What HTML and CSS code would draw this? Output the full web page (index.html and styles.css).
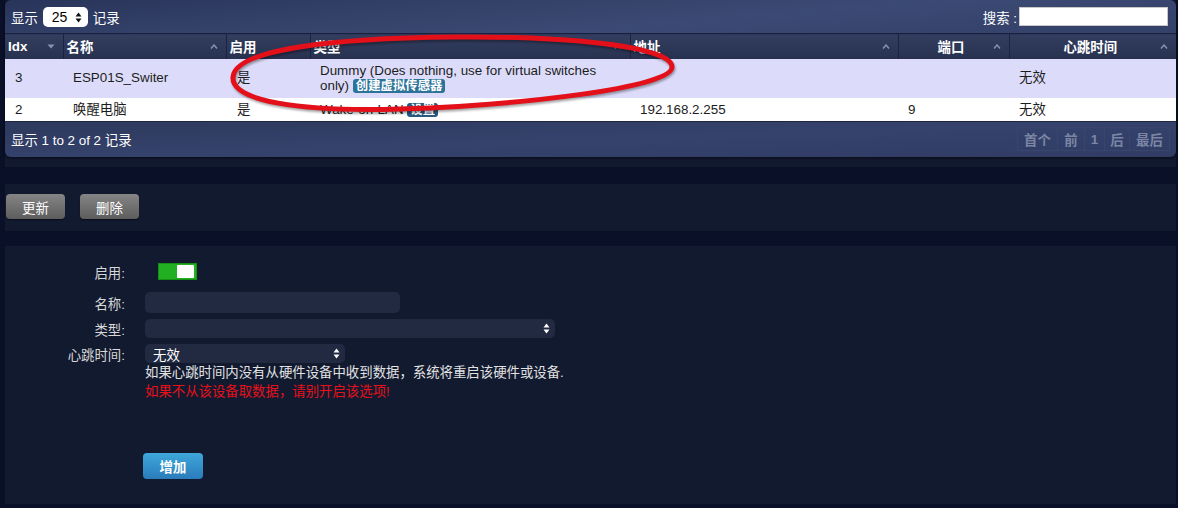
FILE: index.html
```html
<!DOCTYPE html>
<html lang="zh">
<head>
<meta charset="utf-8">
<title>硬件</title>
<link rel="stylesheet" href="styles.css">
</head>
<body>
<div class="page">
  <section class="sec sec-table">
    <div class="panel">
      <div class="topbar">
        <div class="length">
          <span>显示</span>
          <span class="sel-white">25
            <svg class="updown" width="7" height="11" viewBox="0 0 7 11"><path d="M3.5 0.5 L6.5 4.5 L0.5 4.5 Z M3.5 10.5 L6.5 6.5 L0.5 6.5 Z" fill="#111"/></svg>
          </span>
          <span>记录</span>
        </div>
        <div class="search">
          <span>搜索 :</span>
          <span class="search-input"></span>
        </div>
      </div>
      <table class="grid">
        <colgroup>
          <col style="width:58px"><col style="width:163px"><col style="width:84px"><col style="width:320px"><col style="width:268px"><col style="width:111px"><col style="width:167px">
        </colgroup>
        <thead>
          <tr>
            <th><div class="th"><span class="lbl">Idx</span><svg class="sort" width="8" height="5" viewBox="0 0 8 5"><path d="M0.5 0.5 L7.5 0.5 L4 4.5 Z" fill="#8993ad"/></svg></div></th>
            <th><div class="th"><span class="lbl">名称</span><svg class="sort" width="8" height="5" viewBox="0 0 8 5"><path d="M1 4.5 L4 1 L7 4.5" fill="none" stroke="#8993ad" stroke-width="1.4"/></svg></div></th>
            <th><div class="th"><span class="lbl">启用</span></div></th>
            <th><div class="th"><span class="lbl">类型</span><svg class="sort" width="8" height="5" viewBox="0 0 8 5"><path d="M1 4.5 L4 1 L7 4.5" fill="none" stroke="#8993ad" stroke-width="1.4"/></svg></div></th>
            <th><div class="th"><span class="lbl">地址</span><svg class="sort" width="8" height="5" viewBox="0 0 8 5"><path d="M1 4.5 L4 1 L7 4.5" fill="none" stroke="#8993ad" stroke-width="1.4"/></svg></div></th>
            <th><div class="th center"><span class="lbl">端口</span><svg class="sort" width="8" height="5" viewBox="0 0 8 5"><path d="M1 4.5 L4 1 L7 4.5" fill="none" stroke="#8993ad" stroke-width="1.4"/></svg></div></th>
            <th><div class="th center"><span class="lbl">心跳时间</span><svg class="sort" width="8" height="5" viewBox="0 0 8 5"><path d="M1 4.5 L4 1 L7 4.5" fill="none" stroke="#8993ad" stroke-width="1.4"/></svg></div></th>
          </tr>
        </thead>
        <tbody>
          <tr class="row-sel">
            <td>3</td>
            <td>ESP01S_Switer</td>
            <td>是</td>
            <td>Dummy (Does nothing, use for virtual switches only) <span class="badge">创建虚拟传感器</span></td>
            <td></td>
            <td></td>
            <td>无效</td>
          </tr>
          <tr>
            <td>2</td>
            <td>唤醒电脑</td>
            <td>是</td>
            <td>Wake-on-LAN <span class="badge dark">设置</span></td>
            <td>192.168.2.255</td>
            <td>9</td>
            <td>无效</td>
          </tr>
        </tbody>
      </table>
      <div class="footer">
        <span>显示 1 to 2 of 2 记录</span>
        <div class="pager">
          <span class="pg w39">首个</span>
          <span class="pg w27">前</span>
          <span class="pg w20">1</span>
          <span class="pg w25">后</span>
          <span class="pg w40">最后</span>
        </div>
      </div>
    </div>
  </section>

  <section class="sec sec-actions">
    <button class="btn-grey">更新</button>
    <button class="btn-grey">删除</button>
  </section>

  <section class="sec sec-form">
    <div class="frow row-toggle">
      <label class="flabel">启用:</label>
      <span class="toggle"><span class="knob"></span></span>
    </div>
    <div class="frow row-name">
      <label class="flabel">名称:</label>
      <span class="field w255"></span>
    </div>
    <div class="frow row-type">
      <label class="flabel">类型:</label>
      <span class="field select w410">
        <svg class="updown" width="7" height="11" viewBox="0 0 7 11"><path d="M3.5 0.5 L6.5 4.5 L0.5 4.5 Z M3.5 10.5 L6.5 6.5 L0.5 6.5 Z" fill="#fff"/></svg>
      </span>
    </div>
    <div class="frow row-hb">
      <label class="flabel">心跳时间:</label>
      <span class="field select w200"><span class="val">无效</span>
        <svg class="updown" width="7" height="11" viewBox="0 0 7 11"><path d="M3.5 0.5 L6.5 4.5 L0.5 4.5 Z M3.5 10.5 L6.5 6.5 L0.5 6.5 Z" fill="#fff"/></svg>
      </span>
    </div>
    <div class="help">
      <p>如果心跳时间内没有从硬件设备中收到数据，系统将重启该硬件或设备.</p>
      <p class="warn">如果不从该设备取数据，请别开启该选项!</p>
    </div>
    <div class="add-wrap">
      <button class="btn-blue">增加</button>
    </div>
  </section>
</div>

<svg class="annot" width="1178" height="508" viewBox="0 0 1178 508">
  <path d="M233 77 C 235 50, 330 38, 455 37 C 565 36, 672 46, 672 67 C 672 88, 520 105, 400 109 C 300 112, 231 101, 233 77 Z" fill="none" stroke="#e3101a" stroke-width="5"/>
</svg>
</body>
</html>
```

FILE: styles.css
```css
* { box-sizing: border-box; }

body {
  margin: 0;
  width: 1178px;
  height: 508px;
  overflow: hidden;
  position: relative;
  background: #0a1027;
  font-family: "Liberation Sans", "Noto Sans CJK SC", sans-serif;
  font-size: 13.4px;
  color: #fff;
}

.page {
  margin-left: 5px;
  width: 1171px;
}

.sec { background: #121a30; }

.sec-table { padding-bottom: 10px; }

.panel {
  border-radius: 6px;
  overflow: hidden;
  box-shadow: 0 1px 3px rgba(0, 0, 0, 0.6);
}

.topbar {
  height: 33px;
  display: flex;
  align-items: center;
  justify-content: space-between;
  padding: 0 8px 0 6px;
  background: linear-gradient(175deg, #29345a 0%, #37456d 45%, #3b4a74 60%, #334068 100%);
}

.length, .search {
  display: flex;
  align-items: center;
}

.sel-white {
  position: relative;
  display: inline-flex;
  align-items: center;
  width: 45px;
  height: 20px;
  margin: 0 5px 0 5px;
  padding-left: 9px;
  background: #fff;
  border-radius: 5px;
  color: #000;
  font-size: 14px;
}
.sel-white .updown { position: absolute; right: 6px; top: 5px; }

.search-input {
  display: block;
  width: 149px;
  height: 19px;
  margin-left: 2px;
  background: #fff;
  border: 1px solid #c8c8c8;
}

.grid {
  width: 1171px;
  table-layout: fixed;
  border-collapse: collapse;
}

.grid th {
  height: 25px;
  padding: 0 3px;
  text-align: left;
  font-weight: bold;
  color: #fff;
  background: linear-gradient(#333e60, #27314f);
  border-left: 1px solid #1b2340;
  border-top: 1px solid #1a2140;
}
.grid th:first-child { border-left: none; }

.th {
  display: flex;
  align-items: center;
  padding-right: 5px;
}
.th .lbl { flex: 1; }
.th.center .lbl { text-align: center; padding-left: 8px; }
.th .sort { flex: none; }

.grid td {
  padding: 4px 10px;
  line-height: 15.5px;
  color: #1c1c1c;
  background: #fff;
  vertical-align: middle;
}
.grid .row-sel td { background: #dcdcfa; }
.grid td:nth-child(3) { padding-left: 11px; }

.badge {
  display: inline-block;
  padding: 0 3px;
  line-height: 14px;
  vertical-align: 0;
  border-radius: 3px;
  background: #2c7399;
  color: #fff;
  font-weight: bold;
  font-size: 12.4px;
}
.badge.dark { background: #275a7e; }

.footer {
  height: 36px;
  display: flex;
  align-items: center;
  justify-content: space-between;
  padding: 0 6px 1px 6px;
  background: linear-gradient(178deg, #2d395c 0%, #35426c 50%, #303c64 100%);
  border-top: 1px solid #1e2642;
}

.pager {
  display: flex;
  height: 24px;
  border: 1px solid #39456a;
}
.pg {
  display: flex;
  align-items: center;
  justify-content: center;
  border-left: 1px solid #39456a;
  color: #7b86a4;
  font-weight: bold;
}
.pg:first-child { border-left: none; }
.w39 { width: 39px; }
.w27 { width: 27px; }
.w20 { width: 20px; }
.w25 { width: 25px; }
.w40 { width: 40px; }

.sec-actions {
  margin-top: 17px;
  height: 47px;
  padding: 10px 0 0 1px;
  display: flex;
  align-items: flex-start;
  gap: 15px;
}

.btn-grey {
  width: 59px;
  height: 25px;
  border: none;
  border-radius: 4px;
  background: linear-gradient(#858585, #5d5d5d);
  color: #fff;
  font-family: inherit;
  font-size: 13.4px;
  box-shadow: 0 1px 1px rgba(0, 0, 0, 0.5);
}

.sec-form {
  margin-top: 15px;
  height: 258px;
  padding-top: 17px;
}

.frow {
  display: flex;
  align-items: center;
  gap: 20px;
}
.flabel {
  width: 120px;
  text-align: right;
  color: #d8d8d8;
}

.row-toggle { height: 17px; }
.row-name { margin-top: 12px; height: 21px; }
.row-type { margin-top: 6px; height: 19px; }
.row-hb { margin-top: 6px; height: 19px; }

.toggle {
  display: flex;
  justify-content: flex-end;
  align-items: center;
  width: 39px;
  height: 17px;
  margin-left: 13px;
  padding-right: 2px;
  background: #22b022;
  border: 1px solid #159015;
}
.knob {
  width: 17px;
  height: 13px;
  background: #fff;
  border-radius: 1px;
}

.field {
  position: relative;
  display: flex;
  align-items: center;
  height: 100%;
  background: #222a42;
  border-radius: 5px;
}
.w255 { width: 255px; }
.w410 { width: 410px; }
.w200 { width: 200px; }
.field .updown { position: absolute; right: 5px; top: 4px; }
.field .val { padding-left: 8px; color: #fff; }

.help {
  margin-left: 140px;
  color: #e2e2e2;
}
.help p {
  margin: 0;
  line-height: 19px;
}
.help .warn { color: #e8101a; }

.add-wrap {
  margin-top: 52px;
  padding-left: 138px;
}
.btn-blue {
  width: 60px;
  height: 26px;
  border: none;
  border-radius: 4px;
  background: linear-gradient(#3ea7da, #2a7cbb);
  color: #fff;
  font-family: inherit;
  font-size: 13.4px;
  font-weight: bold;
}

.annot {
  position: absolute;
  left: 0;
  top: 0;
  pointer-events: none;
  filter: drop-shadow(1px 2px 1px rgba(0, 0, 0, 0.35));
}
```
